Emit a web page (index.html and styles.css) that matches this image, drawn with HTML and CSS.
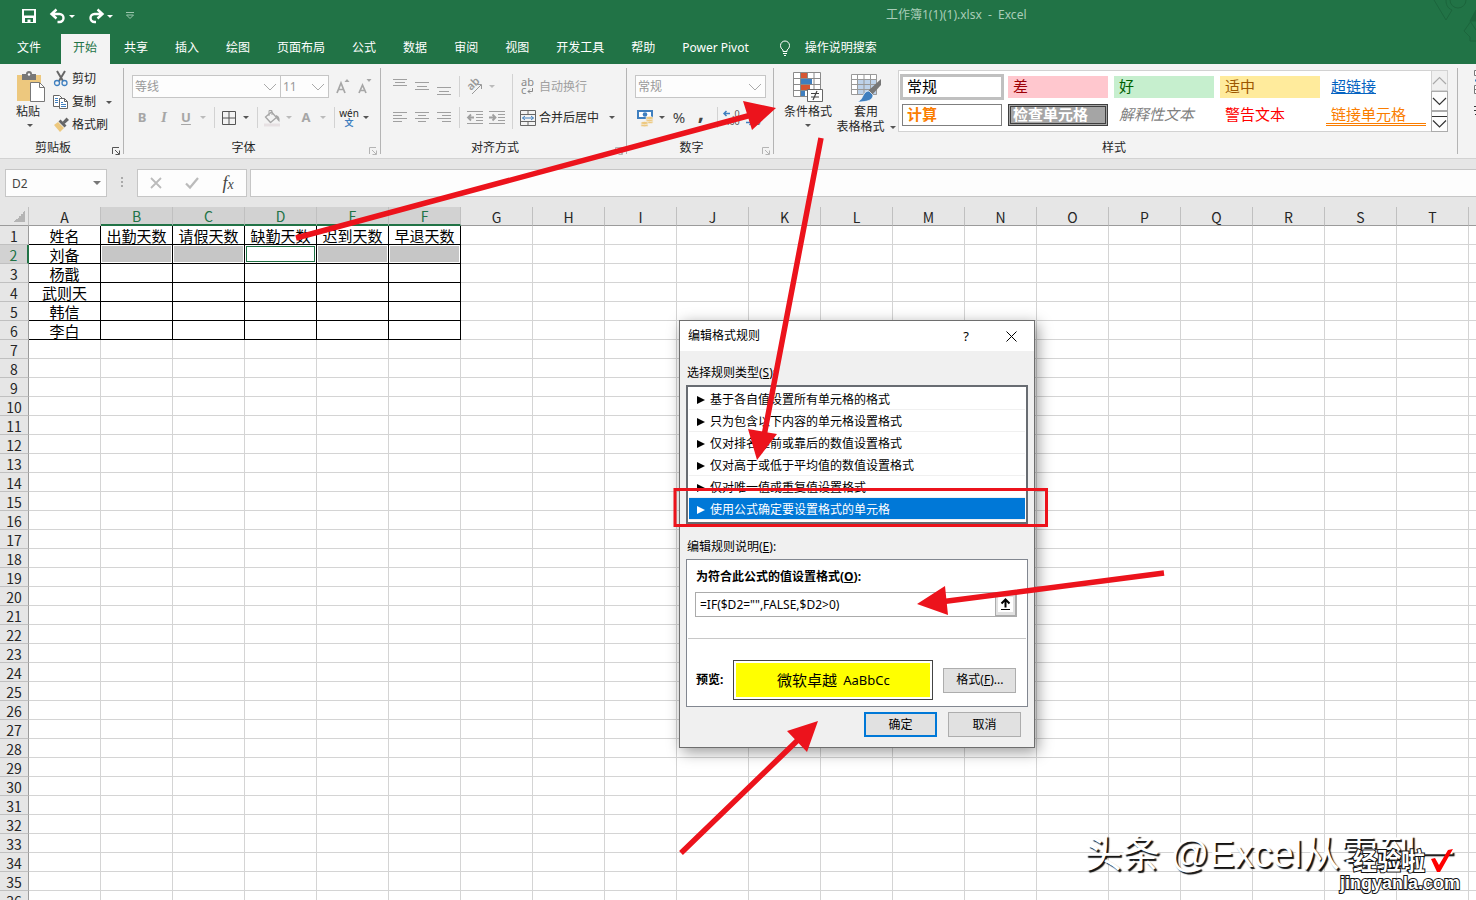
FILE: index.html
```
<!DOCTYPE html>
<html lang="zh-CN">
<head>
<meta charset="utf-8">
<title>工作簿1(1)(1).xlsx - Excel</title>
<link rel="stylesheet" href="styles.css">
</head>
<body>
<header class="titlebar">
  <div class="quick">
    <button class="quick-btn" aria-label="保存"><svg width="16" height="16" viewBox="0 0 16 16"><path d="M1 1h14v14H1z" fill="#fff"/><path d="M3 2.500h10v5H3zM4 10h8v4H9.500v-2.500H6.500V14H4z" fill="#217346"/></svg></button>
    <button class="quick-btn" aria-label="撤消"><svg width="16" height="14" viewBox="0 0 16 14"><path d="M1.500 5H9.500a4 4 0 0 1 0 8H7.500M6.500.500 1.500 5l5 4.500" fill="none" stroke="#fff" stroke-width="2.400"/></svg><i class="caret"></i></button>
    <button class="quick-btn" aria-label="恢复"><svg width="16" height="14" viewBox="0 0 16 14"><path d="M14.500 5H6.500a4 4 0 0 0 0 8H8M9.500.500l5 4.500-5 4.500" fill="none" stroke="#fff" stroke-width="2.400"/></svg><i class="caret"></i></button>
    <button class="quick-btn" aria-label="自定义快速访问工具栏"><svg width="8" height="8" viewBox="0 0 8 8"><path d="M0 .500h8M.500 3h7L4 6.500z" fill="none" stroke="#9cc7ae"/></svg></button>
  </div>
  <h1 class="title">工作簿1(1)(1).xlsx&nbsp; -&nbsp; Excel</h1>
  <svg class="decor" width="50" height="64" viewBox="0 0 50 64" fill="none" stroke="#1c653c"><path d="M8 0l12 20 6-10C21 8 20 4 20 0M24 0a8 8 0 0 0 16 0M50 14 38 31l6 6v4h6M44 21l6 9"/><path d="M50 10l-6 11h6z" fill="#1c653c"/></svg>
</header>
<nav class="tabs">
  <button class="tab file">文件</button>
  <button class="tab active">开始</button>
  <button class="tab">共享</button>
  <button class="tab">插入</button>
  <button class="tab">绘图</button>
  <button class="tab">页面布局</button>
  <button class="tab">公式</button>
  <button class="tab">数据</button>
  <button class="tab">审阅</button>
  <button class="tab">视图</button>
  <button class="tab">开发工具</button>
  <button class="tab">帮助</button>
  <button class="tab">Power Pivot</button>
  <button class="tab tell"><svg width="12" height="16" viewBox="0 0 12 16" fill="none" stroke="#fff"><path d="M4 11.500V10C2.500 9 1.500 7.500 1.500 5.500a4.500 4.500 0 0 1 9 0C10.500 7.500 9.500 9 8 10v1.500zM4 13.500h4M5 15.500h2"/></svg>操作说明搜索</button>
</nav>

<section class="ribbon">
  <div class="group clipboard">
    <div class="body">
      <button class="big"><svg width="30" height="32" viewBox="0 0 30 32"><path d="M1 4h24v26H1z" fill="#edc87e"/><path d="M6 3h4a3 3 0 0 1 6 0h4v6H6z" fill="#777"/><circle cx="13" cy="3.500" r="1.200" fill="#fff"/><path d="M14.500 11.500h9l5 5v14h-14z" fill="#fff" stroke="#777"/><path d="M23.500 11.500v5h5" fill="none" stroke="#777"/></svg><span>粘贴</span><i class="caret"></i></button>
      <div class="stack">
        <button class="line"><svg width="16" height="16" viewBox="0 0 16 16" fill="none"><path d="M4 0l6 10M12 0 6 10" stroke="#666" stroke-width="2"/><circle cx="4" cy="12" r="2.500" stroke="#3f7fbf" stroke-width="1.300"/><circle cx="11.500" cy="12" r="2.500" stroke="#3f7fbf" stroke-width="1.300"/></svg>剪切</button>
        <button class="line"><svg width="16" height="16" viewBox="0 0 16 16" fill="#fff" stroke="#666"><path d="M.500 1.500h6l3 3v8h-9z"/><path d="M6.500 4.500h5l3 3v7h-8z"/><path d="M11.500 4.500v3h3" fill="none"/><path d="M2 4.500h3M2 6.500h3M2 8.500h3M8 8.500h2M8 10.500h5M8 12.500h5" stroke="#3f7fbf"/></svg>复制<i class="caret"></i></button>
        <button class="line"><svg width="16" height="16" viewBox="0 0 16 16"><path d="M1 8l4-3 6 6-4 4z" fill="#edc87e"/><path d="M5.500 4.500l2-2 6 6-2 2z" fill="#666"/><path d="M9.500 5l4-4.500L16 3l-4.500 4z" fill="#666"/></svg>格式刷</button>
      </div>
    </div>
    <div class="caption"><span>剪贴板</span><svg class="launch" viewBox="0 0 8 8"><path d="M.500 7V.500H7M3 3l4 4M7.500 3.500v4h-4"/></svg></div>
  </div>

  <div class="group font">
    <div class="rows">
      <div class="row">
        <select class="combo face" aria-label="字体"><option>等线</option></select><select class="combo size" aria-label="字号"><option>11</option></select>
        <button class="tool grow" aria-label="增大字号"><svg width="14" height="16" viewBox="0 0 14 16"><path d="M1 14 5 4l4 10M2.500 10.500h5" stroke="#a6a6a6" stroke-width="1.700" fill="none"/><path d="M8.500 3 11 0l2.500 3z" fill="#a6a6a6"/></svg></button>
        <button class="tool" aria-label="减小字号"><svg width="14" height="16" viewBox="0 0 14 16"><path d="M1 14 4.500 6 8 14M2.500 11.500h4" stroke="#a6a6a6" stroke-width="1.700" fill="none"/><path d="M8.500 0 11 3l2.500-3z" fill="#a6a6a6"/></svg></button>
      </div>
      <div class="row">
        <button class="tool glyph">B</button><button class="tool glyph italic">I</button><button class="tool glyph under">U</button><button class="drop" aria-label="下划线选项"><i class="caret off"></i></button>
        <i class="sep"></i>
        <button class="tool" aria-label="边框"><svg width="14" height="14" viewBox="0 0 14 14"><path d="M.500.500h13v13H.500zM7 0v14M0 7h14" fill="none" stroke="#555"/></svg></button><button class="drop" aria-label="边框选项"><i class="caret"></i></button>
        <i class="sep"></i>
        <button class="tool" aria-label="填充颜色"><svg width="18" height="18" viewBox="0 0 18 18"><path d="M2.500 8 8.500 3l5 5.500-6 5z" fill="none" stroke="#a6a6a6" stroke-width="1.300"/><path d="M6 7V1.500h3V6" fill="none" stroke="#a6a6a6"/><path d="M13 6c3 1 4 3 3.500 7C15 12 14 10 13 9z" fill="#a6a6a6"/><path d="M1 14.500h16v3H1z" fill="#e6e0e2"/></svg></button><button class="drop" aria-label="填充选项"><i class="caret off"></i></button>
        <button class="tool glyph">A</button><button class="drop" aria-label="字体颜色选项"><i class="caret off"></i></button>
        <i class="sep"></i>
        <button class="tool phonetic"><span>wén</span><b>文</b></button><button class="drop" aria-label="拼音选项"><i class="caret"></i></button>
      </div>
    </div>
    <div class="caption"><span>字体</span><svg class="launch off" viewBox="0 0 8 8"><path d="M.500 7V.500H7M3 3l4 4M7.500 3.500v4h-4"/></svg></div>
  </div>

  <div class="group align">
    <div class="split">
      <div class="rows">
        <div class="row">
          <button class="tool" aria-label="顶端对齐"><svg class="lines" viewBox="0 0 14 18"><path d="M0 1.500h14M2 4.500h10M0 7.500h14"/></svg></button><button class="tool" aria-label="垂直居中"><svg class="lines" viewBox="0 0 14 18"><path d="M0 4.500h14M2 8.500h10M0 11.500h14"/></svg></button><button class="tool" aria-label="底端对齐"><svg class="lines" viewBox="0 0 14 18"><path d="M0 9.500h14M2 13.500h10M0 16.500h14"/></svg></button>
          <i class="sep"></i>
          <button class="tool" aria-label="方向"><svg width="18" height="18" viewBox="0 0 18 18"><text x="0" y="0" transform="translate(5 13) rotate(-45)" font-size="11" font-weight="600" fill="#999">ab</text><path d="M6 16 15 7M11 6.500h4.500V11" fill="none" stroke="#999"/></svg></button><button class="drop" aria-label="方向选项"><i class="caret off"></i></button>
        </div>
        <div class="row">
          <button class="tool" aria-label="左对齐"><svg class="lines" viewBox="0 0 14 18"><path d="M0 3.500h14M0 6.500h9M0 9.500h14M0 12.500h9"/></svg></button><button class="tool" aria-label="居中"><svg class="lines" viewBox="0 0 14 18"><path d="M0 3.500h14M3 6.500h8M0 9.500h14M3 12.500h8"/></svg></button><button class="tool" aria-label="右对齐"><svg class="lines" viewBox="0 0 14 18"><path d="M0 3.500h14M5 6.500h9M0 9.500h14M5 12.500h9"/></svg></button>
          <i class="sep"></i>
          <button class="tool" aria-label="减少缩进"><svg width="16" height="14" viewBox="0 0 16 14" fill="none" stroke="#a0a0a0"><path d="M0 .500h16M9 3.500h7M9 6.500h7M9 9.500h7M0 12.500h16"/><path d="M1 6.500h6M4 3.500l-3 3 3 3" stroke-width="1.800"/></svg></button><button class="tool" aria-label="增加缩进"><svg width="16" height="14" viewBox="0 0 16 14" fill="none" stroke="#a0a0a0"><path d="M0 .500h16M9 3.500h7M9 6.500h7M9 9.500h7M0 12.500h16"/><path d="M0 6.500h6M3.500 3.500l3 3-3 3" stroke-width="1.800"/></svg></button>
        </div>
      </div>
      <div class="rows merge">
        <div class="row"><button class="line faded"><svg width="16" height="16" viewBox="0 0 16 16"><text x="1" y="7" font-size="11" fill="#888">ab</text><text x="1" y="15" font-size="11" fill="#888">c</text><path d="M12.500 9v3.500H8M10 10.500l-2 2 2 2" fill="none" stroke="#888"/></svg>自动换行</button></div>
        <div class="row"><button class="line"><svg width="16" height="16" viewBox="0 0 16 16" fill="none" stroke="#666"><path d="M.500.500h15v15H.500zM0 4.500h16M0 11.500h16M8 0v4M8 12v4" /><path d="M2.500 8h11M5 6 2.500 8 5 10M11 6l2.500 2L11 10" stroke="#3f7fbf"/></svg>合并后居中<i class="caret"></i></button></div>
      </div>
    </div>
    <div class="caption"><span>对齐方式</span><svg class="launch off" viewBox="0 0 8 8"><path d="M.500 7V.500H7M3 3l4 4M7.500 3.500v4h-4"/></svg></div>
  </div>

  <div class="group number">
    <div class="rows">
      <div class="row"><select class="combo format" aria-label="数字格式"><option>常规</option></select></div>
      <div class="row">
        <button class="tool" aria-label="会计数字格式"><svg width="18" height="18" viewBox="0 0 18 18"><path d="M1 1h16v9H1z" fill="#3f7fbf"/><path d="M3 3h12v5H3z" fill="#fff"/><circle cx="9" cy="5.500" r="2.300" fill="#3f7fbf"/><g fill="#edc87e" stroke="#f3f3f3" stroke-width=".6"><ellipse cx="13.500" cy="13" rx="3.700" ry="1.600"/><ellipse cx="13.500" cy="11" rx="3.700" ry="1.600"/><ellipse cx="13.500" cy="9" rx="3.700" ry="1.600"/><ellipse cx="8.500" cy="16.200" rx="3.700" ry="1.600"/><ellipse cx="8.500" cy="14" rx="3.700" ry="1.600"/></g></svg></button><button class="drop" aria-label="货币选项"><i class="caret"></i></button>
        <button class="tool percent">%</button><button class="tool comma">,</button>
        <i class="sep"></i>
        <button class="tool" aria-label="增加小数位数"><svg width="18" height="16" viewBox="0 0 18 16"><path d="M1 3.500h6M3.500 1 1 3.500 3.500 6" fill="none" stroke="#3f7fbf" stroke-width="1.500"/><text x="9" y="7" font-size="9" fill="#555">.0</text><text x="4" y="15" font-size="9" fill="#555">.00</text></svg></button><button class="tool" aria-label="减少小数位数"><svg width="18" height="16" viewBox="0 0 18 16"><text x="1" y="7" font-size="9" fill="#555">.00</text><path d="M1 12.500h6M4.500 10 7 12.500 4.500 15" fill="none" stroke="#3f7fbf" stroke-width="1.500"/><text x="8" y="15" font-size="9" fill="#555">.0</text></svg></button>
      </div>
    </div>
    <div class="caption"><span>数字</span><svg class="launch off" viewBox="0 0 8 8"><path d="M.500 7V.500H7M3 3l4 4M7.500 3.500v4h-4"/></svg></div>
  </div>

  <div class="group styles">
    <div class="body">
      <button class="big cond"><svg width="30" height="32" viewBox="0 0 30 32"><path d="M.500 1.500h27v24H.500z" fill="#fff"/><path d="M8 2h6v5H8zM8 14h9v5H8z" fill="#d65532"/><path d="M8 8h11v5H8zM8 20h4v5H8z" fill="#3f7fbf"/><path d="M.500 1.500h27v24H.500zM7.500 1v24M14.500 1v6M21 1v24M0 7.500h28M0 13.500h28M0 19.500h28" fill="none" stroke="#8a8a8a"/><path d="M14.500 18.500h15v12h-15z" fill="#fff" stroke="#666"/><path d="M18 22.500h8M18 26h8M24 20l-4 9" stroke="#444" fill="none" stroke-width="1.200"/></svg><span>条件格式</span><i class="caret"></i></button>
      <button class="big tablefmt"><svg width="32" height="32" viewBox="0 0 32 32"><path d="M1.500 3.500h25v20h-25z" fill="#fff"/><path d="M8 9h19v15H8z" fill="#bdd2ea"/><path d="M1.500 3.500h25v20h-25zM7.500 3v21M14 3v21M20.500 3v21M1 8.500h26M1 13.500h26M1 18.500h26" fill="none" stroke="#999"/><path d="M31 8v6L22 24l-4-4z" fill="#777"/><path d="M19 20l4 4c0 5-5 7-16 7 5-2 5-5 7-8 1-2 3-3 5-3z" fill="#3f7fbf" stroke="#fff" stroke-width=".7"/></svg><span>套用</span><span class="wide">表格格式<i class="caret"></i></span></button>
      <div class="gallery">
        <div class="swatches">
          <button class="sw normal">常规</button><button class="sw bad">差</button><button class="sw good">好</button><button class="sw neutral">适中</button><button class="sw hyper">超链接</button>
          <button class="sw calc">计算</button><button class="sw check">检查单元格</button><button class="sw explain">解释性文本</button><button class="sw warn">警告文本</button><button class="sw linked">链接单元格</button>
        </div>
        <div class="scroll">
          <button class="dim" aria-label="上一行"><svg width="15" height="9" viewBox="0 0 15 9"><path d="M1 8l6.500-6.500L14 8"/></svg></button>
          <button aria-label="下一行"><svg width="15" height="9" viewBox="0 0 15 9"><path d="M1 1l6.500 6.500L14 1"/></svg></button>
          <button aria-label="其他"><svg width="15" height="14" viewBox="0 0 15 14"><path d="M0 1.500h15M1 5.500 7.500 12 14 5.500"/></svg></button>
        </div>
      </div>
    </div>
    <div class="caption"><span>样式</span></div>
  </div>
  <div class="group cells"><svg width="16" height="60" viewBox="0 0 16 60" fill="#fff" stroke="#777"><path d="M.500 2.500h15v5H.500zM.500 17.500h15v8H.500zM0 21.500h16"/><path d="M1 12.500h8" stroke="#3f7fbf" stroke-width="2"/><path d="M0 38.500h8M0 42.500h8M1 46.500h8" stroke="#333"/></svg></div>
</section>

<section class="formula-row">
  <div class="namebox"><input type="text" value="D2" aria-label="名称框"><i class="caret"></i></div>
  <svg class="dots" width="3" height="11" viewBox="0 0 3 11" fill="#aaa"><path d="M0 0h2v2H0zM0 4h2v2H0zM0 8h2v2H0z"/></svg>
  <div class="fx">
    <button aria-label="取消输入"><svg width="12" height="12" viewBox="0 0 12 12"><path d="M1 1l10 10M11 1 1 11" stroke="#bbb" stroke-width="1.800"/></svg></button>
    <button aria-label="输入"><svg width="14" height="12" viewBox="0 0 14 12"><path d="M1 6.500 5 10.500 13 1" fill="none" stroke="#bbb" stroke-width="2.200"/></svg></button>
    <button class="fn"><i>f</i><i class="x">x</i></button>
  </div>
  <input class="formula" type="text" aria-label="编辑栏">
</section>

<main class="sheet"><table id="grid"></table></main>

<div class="dialog" role="dialog" aria-labelledby="dlg-title">
  <div class="dlg-head"><h2 id="dlg-title">编辑格式规则</h2><button class="help">?</button><button class="close" aria-label="关闭"><svg width="11" height="11" viewBox="0 0 11 11"><path d="M.500.500l10 10M10.500.500l-10 10" stroke="#000"/></svg></button></div>
  <div class="dlg-body">
    <p class="label" id="types">选择规则类型(<u>S</u>):</p>
    <ul class="rules" role="listbox" aria-labelledby="types">
      <li>基于各自值设置所有单元格的格式</li>
      <li>只为包含以下内容的单元格设置格式</li>
      <li>仅对排名靠前或靠后的数值设置格式</li>
      <li>仅对高于或低于平均值的数值设置格式</li>
      <li>仅对唯一值或重复值设置格式</li>
      <li class="picked">使用公式确定要设置格式的单元格</li>
    </ul>
    <p class="label desc">编辑规则说明(<u>E</u>):</p>
    <div class="panel">
      <label class="strong" for="rule">为符合此公式的值设置格式(<u>O</u>):</label>
      <div class="ref"><input id="rule" type="text" value='=IF($D2="",FALSE,$D2&gt;0)'><button aria-label="选择区域"><svg width="15" height="15" viewBox="0 0 15 15"><path d="M0 0h15v15H0z" fill="#fff"/><path d="M7.500 2.500v8M3.500 6.500l4-4 4 4" fill="none" stroke="#000" stroke-width="2"/><path d="M3 12.500h9" stroke="#000"/></svg></button></div>
      <hr>
      <div class="preview-row"><span class="strong">预览:</span><div class="preview"><div class="sample">微软卓越<span>AaBbCc</span></div></div><button class="btn">格式(<u>F</u>)...</button></div>
    </div>
    <div class="actions"><button class="btn primary">确定</button><button class="btn">取消</button></div>
  </div>
</div>

<div class="watermark">头条 @Excel从零到一</div>
<div class="brand"><div class="brand-name">经验啦<svg width="24" height="24" viewBox="0 0 24 24"><path d="M1 10l4-1 4 7L18 1l5-1L10 23H7z" fill="#f00"/></svg></div><div class="brand-site">jingyanla.com</div></div>

<svg class="marks" width="1476" height="900" viewBox="0 0 1476 900">
  <g stroke="#ec131c" stroke-width="5.500" fill="none"><path d="M296 238 755 114M821 138 764 436M1164 573 940 602M681 853 800 738"/><path d="M675 489.500h371.500v36H675z" stroke-width="3"/></g>
  <path d="M776 108 743 101l9 29zM757 460l-9-31 29 5zM917 604l28-18 3 29zM818 721l-31 10 20 21z" fill="#ec131c"/>
</svg>
<script src="grid.js"></script>
</body>
</html>
```
FILE: styles.css
```
* { box-sizing: border-box; }
body { margin: 0; height: 100vh; display: flex; flex-direction: column; overflow: hidden; position: relative; background: #fff; color: #262626; font: 12px/16px "Noto Sans", "Noto Sans CJK SC", sans-serif; }
button, input, select { font: inherit; color: inherit; margin: 0; padding: 0; border: 0; background: none; border-radius: 0; outline: 0; }
button { display: flex; align-items: center; justify-content: center; white-space: nowrap; }
h1, h2, p, ul { margin: 0; padding: 0; font-size: 12px; font-weight: 400; list-style: none; }
svg { flex: none; overflow: visible; }

.caret { width: 0; height: 0; flex: none; border: 3px solid transparent; border-top-color: #555; border-bottom: 0; }
.caret.off { border-top-color: #bbb; }

.titlebar { height: 34px; flex: none; display: flex; align-items: center; background: #217346; color: #a9cdb8; position: relative; }
.quick { display: flex; align-items: center; width: 886px; padding: 0 0 2px 21px; gap: 13px; }
.quick .caret { border-top-color: #fff; margin-left: 3px; }
.title { line-height: 16px; padding-bottom: 4px; }
.decor { position: absolute; right: 0; top: 0; overflow: hidden; }

.tabs { height: 30px; flex: none; display: flex; gap: 2px; background: #217346; color: #fff; }
.tab { padding: 0 13px 2px 12px; }
.tab.file { padding: 0 18px 2px 17px; }
.tab.active { background: #f3f3f3; color: #217346; }
.tab.tell { gap: 14px; padding-left: 15px; }

.ribbon { height: 95px; flex: none; display: flex; background: #f3f3f3; border-bottom: 1px solid #d2d2d2; }
.group { display: flex; flex-direction: column; justify-content: space-between; flex: none; border-right: 1px solid #b4b4b4; margin: 4px 0; padding-top: 2px; height: 86px; }
.clipboard { width: 124px; }
.font { width: 257px; }
.align { width: 246px; }
.number { width: 147px; }
.styles { flex: 1 1 0; min-width: 0; }
.cells { width: 18px; border: 0; overflow: hidden; padding: 0 0 0 16px; }
.body { display: flex; }
.caption { display: flex; align-items: center; height: 16px; padding-right: 3px; margin-bottom: -2px; }
.caption span { flex: 1; text-align: center; padding-right: 6px; }
.styles .caption span { padding-right: 0; }
.launch { width: 8px; height: 8px; margin-top: 5px; fill: none; stroke: #555; }
.launch.off { stroke: #b4b4b4; }

.big { flex-direction: column; justify-content: flex-start; padding-top: 1px; }
.big svg { margin-bottom: 1px; }
.big .caret { margin-top: 4px; }
.clipboard .big { width: 46px; padding-left: 14px; align-items: flex-start; }
.clipboard .big svg { margin-left: 2px; }
.clipboard .big span { margin-left: 2px; }
.clipboard .big .caret { margin-left: 13px; }
.stack { display: flex; flex-direction: column; gap: 7px; padding: 1px 0 0 7px; }
.line { gap: 3px; justify-content: flex-start; height: 16px; }
.line .caret { margin-left: 7px; }
.faded { color: #a0a0a0; }

.rows { display: flex; flex-direction: column; gap: 8px; padding: 5px 0 0 7px; }
.row { display: flex; align-items: center; height: 23px; }
.combo { appearance: none; height: 23px; border: 1px solid #c6c6c6; padding: 0 2px; color: #999; background: #fdfdfd url("data:image/svg+xml,%3Csvg xmlns='http://www.w3.org/2000/svg' width='14' height='8'%3E%3Cpath d='M1 1l6 6 6-6' fill='none' stroke='%23aaa'/%3E%3C/svg%3E") no-repeat right 3px center; }
.face { width: 149px; margin-left: 1px; }
.size { width: 48px; border-left: 0; }
.format { width: 131px; margin-left: 1px; }
.tool { width: 22px; height: 22px; flex: none; }
.tool.grow { margin-left: 3px; }
.drop { width: 12px; height: 22px; flex: none; }
.sep { width: 1px; height: 21px; background: #d2d2d2; margin: 0 3px 0 5px; flex: none; }
.glyph { font-weight: 700; font-size: 13px; color: #a6a6a6; padding-bottom: 2px; }
.italic { font-style: italic; font-family: "Liberation Serif", serif; font-size: 15px; }
.under { text-decoration: underline; text-underline-offset: 2px; }
.phonetic { flex-direction: column; font-size: 10px; line-height: 9px; }
.phonetic b { color: #3f7fbf; font-size: 9px; }
.lines { width: 14px; height: 18px; fill: none; stroke: #a0a0a0; }
.split { display: flex; }
.align .sep { margin: 0 4px; }
.align .rows { padding-left: 8px; }
.align .merge { padding-left: 7px; margin: 4px 0 0 5px; padding-top: 1px; border-left: 1px solid #d2d2d2; }
.align .rows:first-child { width: 126px; }
.percent { font-size: 15px; color: #444; padding-bottom: 2px; }
.comma { font-size: 22px; font-weight: 700; line-height: 16px; color: #444; padding-bottom: 14px; }
.number .rows { width: 142px; }

.cond { width: 68px; }
.tablefmt { width: 56px; padding-right: 8px; }
.tablefmt span + span { line-height: 14px; }
.wide { display: flex; align-items: center; gap: 5px; }
.wide .caret { margin: 0; }
.gallery { flex: 1; min-width: 0; display: flex; height: 62px; margin-right: 9px; border: 1px solid #d2d2d2; background: #fff; }
.swatches { flex: 1; display: grid; grid-template-columns: repeat(5, 100px); grid-template-rows: 22px 22px; gap: 6px; padding: 5px 0 0 3px; }
.sw { justify-content: flex-start; padding: 0 0 2px 5px; font-size: 15px; color: #000; }
.normal { outline: 3px solid #c0c0c0; outline-offset: -1px; }
.bad { background: #ffc7ce; color: #9c0006; }
.good { background: #c6efce; color: #006100; }
.neutral { background: #ffeb9c; color: #9c5700; }
.hyper { color: #0563c1; text-decoration: underline; }
.calc { border: 1px solid #7f7f7f; color: #fa7d00; font-weight: 700; padding-left: 4px; }
.check { border: 3px double #3f3f3f; background: #a5a5a5; color: #fff; font-weight: 700; padding-left: 2px; }
.explain { color: #7f7f7f; font-style: italic; }
.warn { color: #f00; }
.linked { color: #fa7d00; border-bottom: 3px double #fa7d00; padding-bottom: 0; }
.scroll { width: 17px; display: flex; flex-direction: column; margin: -1px; }
.scroll button { flex: 1; border: 1px solid #ababab; background: #fdfdfd; }
.scroll svg { fill: none; stroke: #333; stroke-width: 1.2; }
.scroll .dim { background: #f0f0f0; border-color: #d2d2d2; }
.scroll .dim svg { stroke: #aaa; }

.formula-row { height: 48px; flex: none; display: flex; align-items: center; background: #e6e6e6; padding: 0 0 1px 5px; }
.namebox { width: 102px; height: 28px; display: flex; align-items: center; border: 1px solid #c6c6c6; background: #fdfdfd; padding: 0 5px 0 6px; color: #444; }
.namebox input { flex: 1; min-width: 0; padding-top: 2px; }
.namebox .caret { border-width: 4px 4px 0; border-top-color: #777; }
.dots { margin: 0 13px 0 14px; }
.fx { width: 110px; height: 28px; display: flex; border: 1px solid #c6c6c6; background: #fdfdfd; }
.fx button { flex: 1; }
.fn { font: italic 400 18px/18px "Liberation Serif", serif; color: #444; }
.fn .x { font-size: 14px; padding-top: 4px; }
.formula { flex: 1; height: 28px; margin-left: 3px; border: 1px solid #c6c6c6; border-right: 0; background: #fdfdfd; }

.sheet { flex: 1; min-height: 0; overflow: hidden; background: #fff; }
#grid { table-layout: fixed; border-collapse: separate; border-spacing: 0; width: 1541px; font: 15px/16px "Noto Sans CJK SC", sans-serif; color: #000; }
#grid th, #grid td { height: 19px; padding: 2px 0 0; text-align: center; font-weight: 400; white-space: nowrap; border-right: 1px solid #d4d4d4; border-bottom: 1px solid #d4d4d4; }
#grid th { font-size: 14px; background: #e6e6e6; border-color: #c0c0c0; color: #262626; }
#grid thead th { border-bottom-color: #9b9b9b; }
#grid tbody th { border-right-color: #9b9b9b; }
#grid .corner { background: linear-gradient(135deg, #e6e6e6 50%, #b4b4b4 50%) no-repeat 14px 4px / 11px 11px #e6e6e6; }
#grid thead .on { background: #d2d2d2; color: #217346; border-bottom: 2px solid #217346; line-height: 15px; }
#grid tbody .on { background: #d2d2d2; color: #217346; border-right: 2px solid #217346; }
#grid .boxed { border-color: #000; }
#grid .selected { background: #c6c6c6; box-shadow: inset 0 0 0 1px #fff; }
#grid .current { box-shadow: inset 0 0 0 1px #fff, inset 0 0 0 2px #217346; }

.dialog { position: absolute; left: 679px; top: 320px; width: 356px; border: 1px solid #6e6e6e; background: #f0f0f0; box-shadow: 3px 4px 14px rgba(0, 0, 0, .4); color: #000; }
.dlg-head { height: 30px; display: flex; align-items: center; background: #fff; padding-left: 8px; }
.dlg-head h2 { flex: 1; }
.help { width: 44px; font-size: 13px; }
.close { width: 46px; height: 28px; }
.dlg-body { padding: 14px 6px 10px; }
.label { padding-left: 1px; }
.rules { margin-top: 4px; border: 2px solid #686c72; background: #fff; padding: 1px 1px 2px; }
.rules li { height: 22px; line-height: 19px; padding: 2px 0 0 8px; border-bottom: 1px solid #f0f0f0; }
.rules li::before { content: ""; display: inline-block; border: 4px solid transparent; border-left: 8px solid #000; border-right: 0; margin-right: 5px; }
.rules .picked { background: #0078d7; color: #fff; }
.rules .picked::before { border-left-color: #fff; }
.desc { margin-top: 15px; }
.panel { margin-top: 4px; border: 1px solid #828790; background: #fff; padding: 9px 0 6px; }
.strong { display: block; font-weight: 700; padding-left: 9px; }
.ref { display: flex; height: 25px; margin: 7px 10px 0 8px; border: 1px solid #ababab; }
.ref input { flex: 1; min-width: 0; padding-left: 4px; }
.ref button { width: 21px; background: #e1e1e1; border: 1px solid #ababab; }
hr { border: 0; border-top: 1px solid #c8c8c8; margin: 21px 1px; }
.preview-row { display: flex; align-items: center; }
.preview { width: 200px; height: 40px; border: 1px solid #444; padding: 2px; margin: 0 10px; background: #fff; }
.sample { height: 34px; display: flex; align-items: center; justify-content: center; gap: 6px; background: #ff0; font-size: 15px; }
.sample span { font-size: 13px; }
.btn { width: 73px; height: 25px; border: 1px solid #adadad; background: #e1e1e1; }
.primary { border: 2px solid #0078d7; }
.actions { display: flex; justify-content: flex-end; gap: 11px; padding: 5px 7px 0 0; }

.watermark { position: absolute; right: 22px; top: 828px; font-size: 38px; line-height: 52px; font-family: "Liberation Sans", "Noto Sans CJK SC", sans-serif; white-space: nowrap; color: #fff; text-shadow: 2px 2px 1px #111; }
.brand { position: absolute; right: 16px; top: 848px; color: #fff; font-weight: 700; text-align: right; -webkit-text-stroke: 2px #111; paint-order: stroke fill; }
.brand-name { display: flex; justify-content: flex-end; align-items: center; gap: 5px; padding-right: 6px; font-size: 24px; line-height: 26px; }
.brand-site { font: 700 18px/18px "Liberation Sans", sans-serif; }
.marks { position: absolute; left: 0; top: 0; pointer-events: none; }
```
FILE: grid.js
```
const columns = "ABCDEFGHIJKLMNOPQRSTU".split("");
const rowCount = 36;
const data = [
  ["姓名", "出勤天数", "请假天数", "缺勤天数", "迟到天数", "早退天数"],
  ["刘备"], ["杨戬"], ["武则天"], ["韩信"], ["李白"]
];
const inRange = c => c >= 1 && c <= 5;

const head = columns.map((name, c) => `<th class="${inRange(c) ? "on" : ""}">${name}</th>`).join("");
const widths = `<col style="width:29px">` + `<col style="width:72px">`.repeat(columns.length);

let rows = "";
for (let r = 0; r < rowCount; r++) {
  const cells = columns.map((_, c) => {
    const names = [];
    if (r < data.length && c < 6) names.push("boxed");
    if (r === 1 && inRange(c)) names.push(c === 3 ? "current" : "selected");
    return `<td class="${names.join(" ")}">${(data[r] && data[r][c]) || ""}</td>`;
  }).join("");
  rows += `<tr><th class="${r === 1 ? "on" : ""}">${r + 1}</th>${cells}</tr>`;
}

document.getElementById("grid").innerHTML =
  `<colgroup>${widths}</colgroup><thead><tr><th class="corner"></th>${head}</tr></thead><tbody>${rows}</tbody>`;
```
